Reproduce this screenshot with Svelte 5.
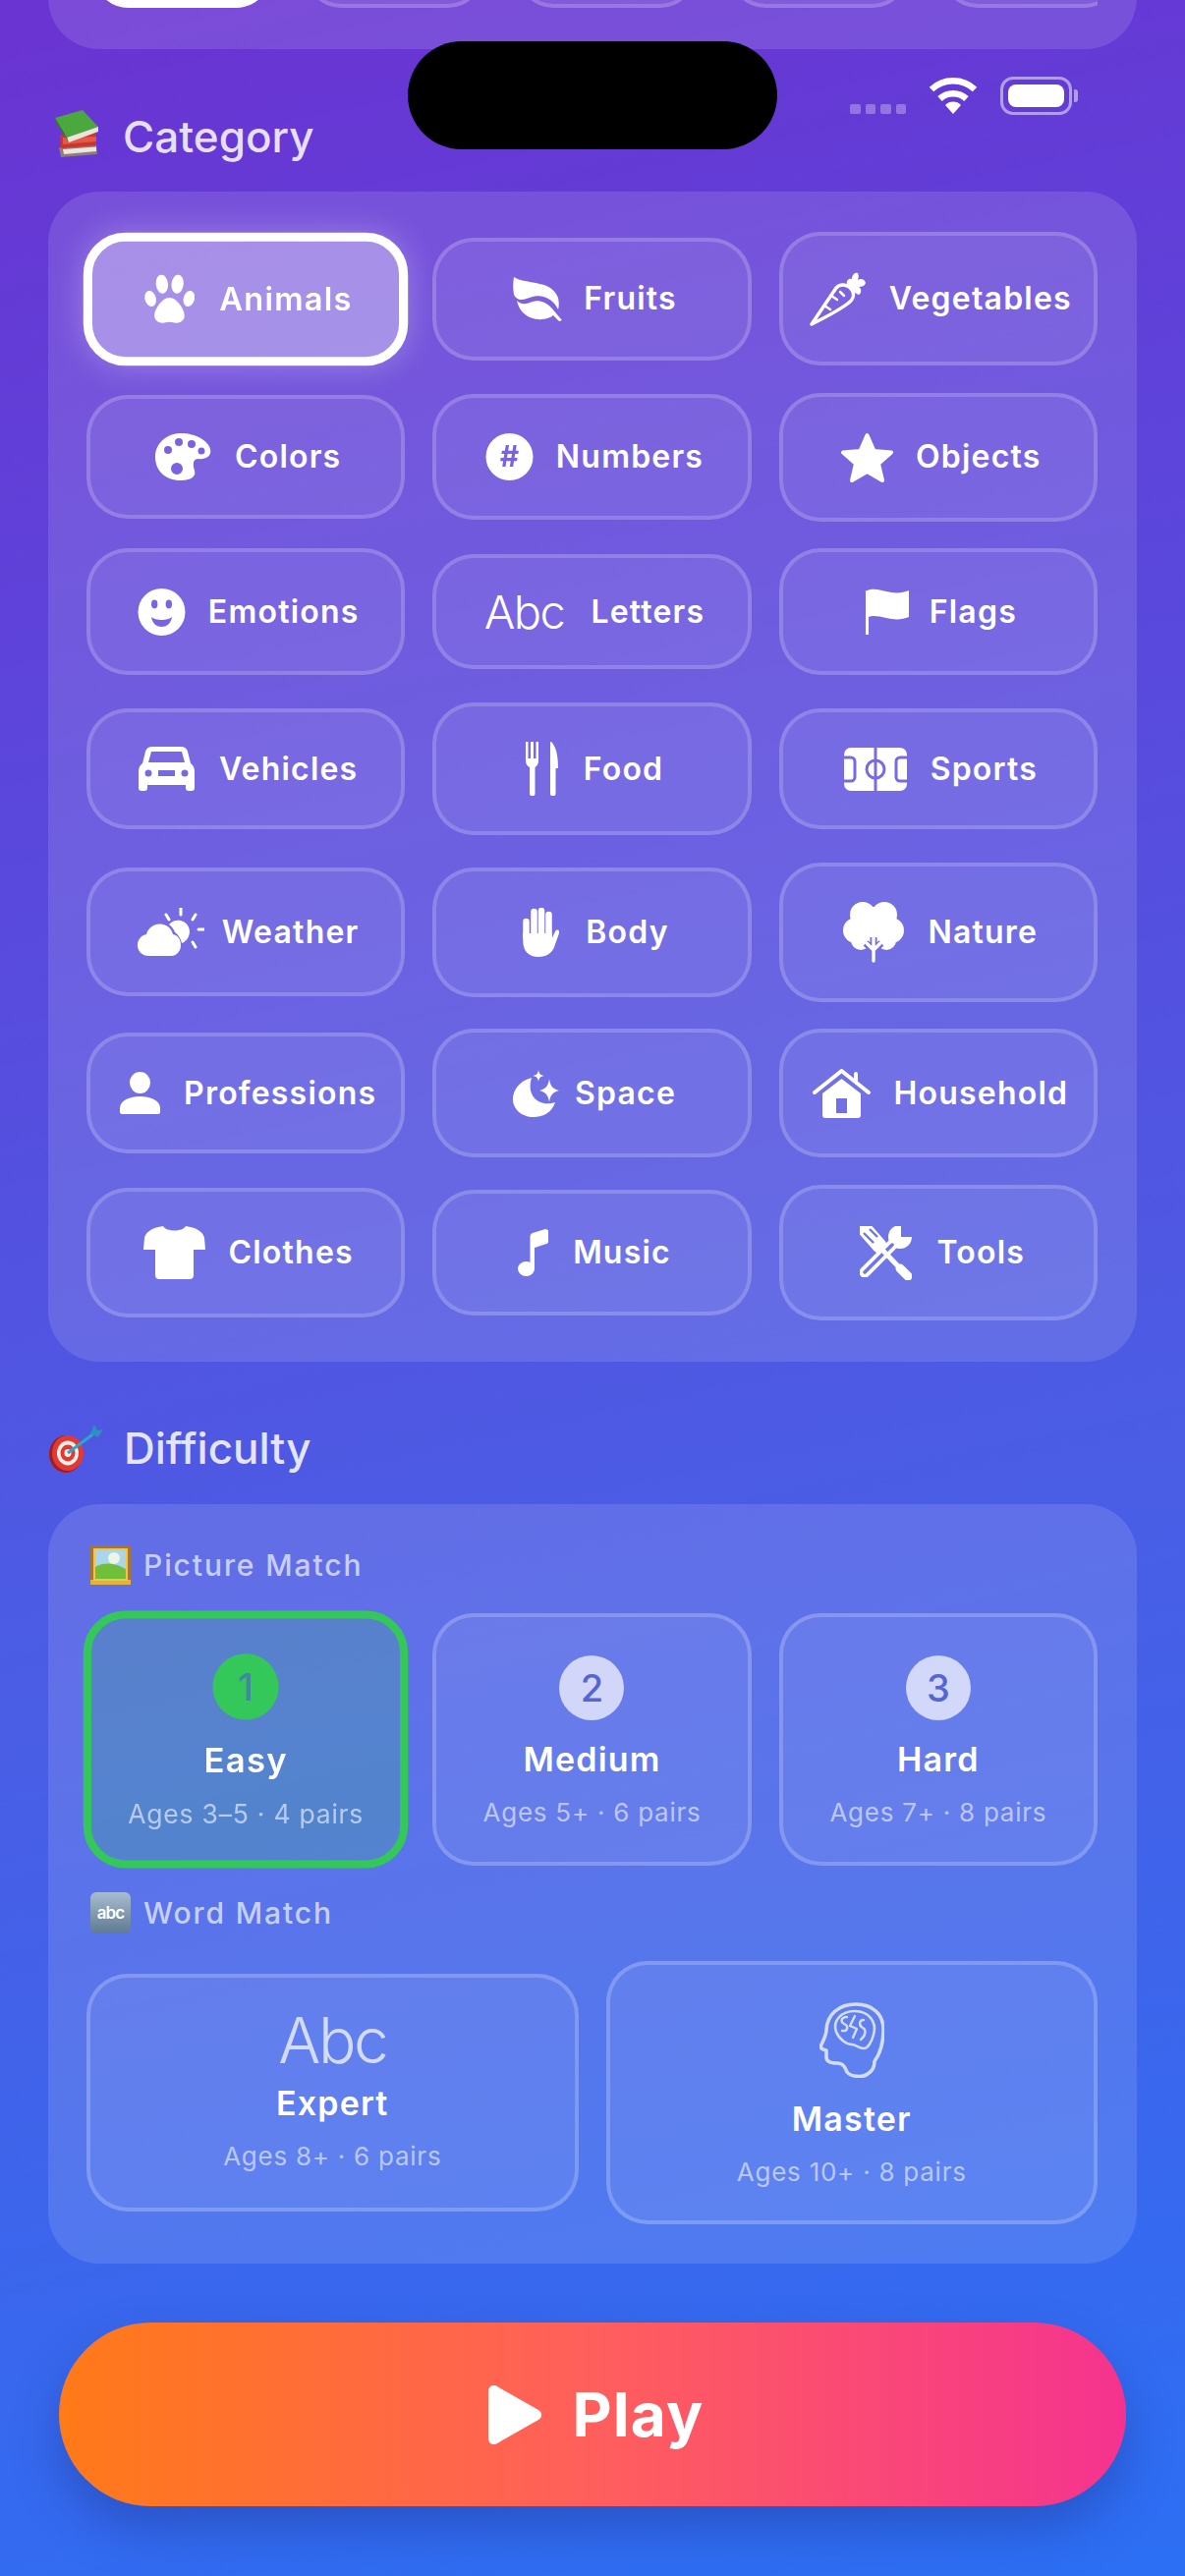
<script>
  const hole = (cx, cy, r) => `M${cx - r} ${cy}a${r} ${r} 0 1 0 ${2 * r} 0a${r} ${r} 0 1 0 ${-2 * r} 0Z`;

  // w/h are the drawn icon, box is the height of the button around it, gap the space before its label
  const categories = [
    { label: 'Animals', box: 133, gap: 25, selected: true, w: 50, h: 49, art: `
      <ellipse cx="6" cy="24" rx="5.5" ry="8" transform="rotate(-14 6 24)"/><ellipse cx="17.5" cy="9.5" rx="6" ry="9.5" transform="rotate(-6 17.5 9.5)"/>
      <ellipse cx="33" cy="9.5" rx="6" ry="9.5" transform="rotate(6 33 9.5)"/><ellipse cx="44.5" cy="24" rx="5.5" ry="8" transform="rotate(14 44.5 24)"/>
      <path d="M25 23C18 23 10 34 10 41C10 47 16 49 20 48C23 47 27 47 30 48C34 49 40 47 40 41C40 34 32 23 25 23Z"/>` },
    { label: 'Fruits', box: 125, gap: 21, w: 52, h: 45, art: `
      <path d="M2 0C14 8 40 2 47 21C48 26 48 30 47 33C42 22 30 16 18 21C10 24 5 24 2 18C1 12 1 6 2 0Z"/>
      <path d="M5 24C10 29 16 27 21 25C30 22 38 27 45 37L51 44L48 45L42 39C34 46 10 46 5 24Z"/>` },
    { label: 'Vegetables', box: 136, gap: 23, w: 58, h: 55, art: `
      <path d="M2 53L27 16C32 11 40 13 43 18C46 23 44 28 40 31C30 39 14 47 2 53Z" fill="none" stroke="#fff" stroke-width="3.5" stroke-linejoin="round"/>
      <path d="M22 24L28 28M15 34L21 38M31 20L35 24" stroke="#fff" stroke-width="2.5" stroke-linecap="round"/>
      <path d="M38 13C37 8 40 6 43 7C43 3 46 0 49 1C50 3 50 5 49 8C52 6 56 7 57 11C56 14 53 15 50 15C53 17 53 21 50 23C47 22 44 20 43 17Z"/>` },
    { label: 'Colors', box: 126, gap: 23, w: 58, h: 48, art: `
      <path fill-rule="evenodd" d="M26 0C42 0 54 8 56 16C58 24 50 27 44 26C38 26 38 32 40 38C42 44 36 48 26 48C10 48 0 38 0 24C0 10 12 0 26 0Z${hole(13, 17, 4)}${hole(24, 9, 4)}${hole(37, 11, 4)}${hole(47, 18, 3.5)}${hole(22, 36, 6)}"/>` },
    { label: 'Numbers', box: 128, gap: 23, w: 49, h: 48, art: `
      <mask id="numMask"><rect width="49" height="48" fill="#fff"/><text x="24.5" y="34" text-anchor="middle" font-size="30" font-weight="700" font-family="Inter" fill="#000">#</text></mask>
      <circle cx="24.5" cy="24" r="24" mask="url(#numMask)"/>` },
    { label: 'Objects', box: 131, gap: 22, w: 55, h: 51, art: `
      <path d="M27.5 3L34.5 19L52 20.5L39 32L43 49L27.5 40L12 49L16 32L3 20.5L20.5 19Z" stroke="#fff" stroke-width="4" stroke-linejoin="round"/>` },
    { label: 'Emotions', box: 129, gap: 23, w: 49, h: 48, art: `
      <path fill-rule="evenodd" d="${hole(24.5, 24, 24)}M14 16a3.2 4.4 0 1 0 6.4 0a3.2 4.4 0 1 0 -6.4 0ZM28.6 16a3.2 4.4 0 1 0 6.4 0a3.2 4.4 0 1 0 -6.4 0ZM14 29C18 33 31 33 35 29C34 36 29 39 24.5 39C20 39 15 36 14 29Z"/>` },
    { label: 'Letters', box: 117, gap: 27, w: 79, h: 34, text: 'Abc' },
    { label: 'Flags', box: 129, gap: 21, w: 45, h: 47, art: `
      <path d="M0 3C8 -1 14 1 22 3C30 5 38 5 45 2V29C38 32 30 32 22 30C14 28 8 27 4 29V47H1V3Z"/>` },
    { label: 'Vehicles', box: 123, gap: 25, w: 57, h: 45, art: `
      <path fill-rule="evenodd" d="M14 0H43C47 0 49 2 50 5L53 17C56 19 57 22 57 26V42C57 44 56 45 54 45H51C49 45 48 44 48 42V39H9V42C9 44 8 45 6 45H3C1 45 0 44 0 42V26C0 22 1 19 4 17L7 5C8 2 10 0 14 0ZM13 5L10 16H47L44 5Z${hole(10, 27, 3.5)}${hole(47, 27, 3.5)}M20 24H37V30H20Z"/>` },
    { label: 'Food', box: 135, gap: 26, w: 33, h: 55, art: `
      <path d="M0 0H2.5V17H5V0H8V17H10.5V0H13V19C13 23 11 25 9.5 26V53C9.5 56 4 56 4 53V26C2 25 0 23 0 19Z"/>
      <path d="M26 0C31 5 33 14 33 27H30.5V53C30.5 56 25 56 25 53V2C25 0 25 0 26 0Z"/>` },
    { label: 'Sports', box: 123, gap: 24, w: 64, h: 44, art: `
      <mask id="courtMask"><rect width="64" height="44" fill="#fff"/>
        <g fill="none" stroke="#000" stroke-width="3"><path d="M32 0V44"/><circle cx="32" cy="22" r="9"/><rect x="-4" y="10" width="15" height="24" rx="4"/><rect x="53" y="10" width="15" height="24" rx="4"/></g></mask>
      <rect width="64" height="44" rx="7" mask="url(#courtMask)"/>` },
    { label: 'Weather', box: 131, gap: 18, w: 68, h: 49, art: `
      <path d="M12 49C4 49 0 44 0 38C0 32 4 28 9 27C11 20 18 15 26 17C31 18 35 22 36 27C41 28 44 32 44 38C44 44 40 49 34 49Z"/>
      <path d="M32 17C35 13 40 12 44 13C51 15 55 22 52 29C51 32 48 35 45 36C44 31 41 27 38 25C37 22 35 19 32 17Z"/>
      <path d="M44 0V7M29 7L32 12M59 7L56 12M62 22H68M56 35L59 40" stroke="#fff" stroke-width="3" stroke-linecap="round"/>` },
    { label: 'Body', box: 132, gap: 27, w: 40, h: 50, art: `
      <path d="M6.5 14V30M14.5 4V28M22 3V28M29.5 7V30" stroke="#fff" stroke-width="6.5" stroke-linecap="round"/>
      <path d="M3.3 26H32.8V31L36 24C38 21 41 23 40 26L35 40C33 46 27 50 19 50C9 50 3.3 44 3.3 34Z"/>` },
    { label: 'Nature', box: 142, gap: 24, w: 62, h: 62, art: `
      <mask id="treeMask"><rect width="62" height="62" fill="#fff"/><path d="M31 36V62M31 49L23 42M31 49L39 42" fill="none" stroke="#000" stroke-width="7"/></mask>
      <g mask="url(#treeMask)"><circle cx="20" cy="13" r="13"/><circle cx="42" cy="13" r="13"/><circle cx="13" cy="29" r="13"/><circle cx="49" cy="29" r="13"/><circle cx="31" cy="24" r="19"/><circle cx="18" cy="39" r="10"/><circle cx="44" cy="39" r="10"/></g>
      <path d="M31 36V60M31 49L24 42M31 49L38 42" fill="none" stroke="#fff" stroke-width="3.4" stroke-linecap="round"/>` },
    { label: 'Professions', box: 123, gap: 24, w: 41, h: 43, art: `
      <ellipse cx="20.5" cy="11" rx="10.5" ry="11"/><path d="M0 41V37C0 29 10 25 20.5 25C31 25 41 29 41 37V41C41 42 40 43 39 43H2C1 43 0 42 0 41Z"/>` },
    { label: 'Space', box: 131, gap: 15, w: 48, h: 48, art: `
      <path d="M19 8C7 11 0 20 0 30C0 40 9 48 21 48C31 48 40 43 43 33C28 38 13 28 19 8Z"/>
      <path d="M37 9C38 16 40 19 47 21C40 23 38 26 37 33C36 26 34 23 27 21C34 19 36 16 37 9Z"/><path d="M26 0C26.6 4 28 5.4 32 6C28 6.6 26.6 8 26 12C25.4 8 24 6.6 20 6C24 5.4 25.4 4 26 0Z"/>` },
    { label: 'Household', box: 131, gap: 23, w: 59, h: 50, art: `
      <path d="M2 24L29.5 2L57 24M44 12V5" fill="none" stroke="#fff" stroke-width="4" stroke-linecap="round" stroke-linejoin="round"/>
      <path fill-rule="evenodd" d="M10 25L29.5 10L49 25V47C49 49 48 50 46 50H13C11 50 10 49 10 47ZM24 30V45H35V30Z"/>` },
    { label: 'Clothes', box: 132, gap: 24, w: 63, h: 54, art: `
      <path d="M20 0C23 6 40 6 43 0L48 1C56 3 61 7 62 12L63 24H51V50C51 53 49 54 47 54H16C14 54 12 53 12 50V24H0L1 12C2 7 7 3 15 1Z"/>` },
    { label: 'Music', box: 128, gap: 25, w: 31, h: 48, art: `
      <ellipse cx="8.5" cy="40.5" rx="8.5" ry="7.5"/><path d="M12.5 40V8C12.5 6 13 5 15 4L28 0C30 0 31 1 31 2V13C31 14 30 15 29 15L17 19V40Z"/>` },
    { label: 'Tools', box: 138, gap: 26, w: 56, h: 55, art: `
      <mask id="toolMask"><rect x="-4" y="-4" width="64" height="64" fill="#fff"/>
        <path d="M36 19L8 47" stroke="#000" stroke-width="3.5" stroke-linecap="round"/><path d="M45 -2L45 11L56 11L58 -2Z" fill="#000"/><path d="M7 7L17 17M13 3L21 11" stroke="#000" stroke-width="2.4"/></mask>
      <g mask="url(#toolMask)"><path d="M38 17L8 47" stroke="#fff" stroke-width="11" stroke-linecap="round"/><circle cx="44" cy="11" r="12"/><path d="M9 4L23 20" stroke="#fff" stroke-width="15" stroke-linecap="round"/></g>
      <path d="M23 21L45 44" stroke="#fff" stroke-width="5"/><path d="M44 43L52 51" stroke="#fff" stroke-width="9" stroke-linecap="round"/>` }
  ];

  const picture = [
    { num: 1, name: 'Easy', info: 'Ages 3–5 · 4 pairs', selected: true },
    { num: 2, name: 'Medium', info: 'Ages 5+ · 6 pairs' },
    { num: 3, name: 'Hard', info: 'Ages 7+ · 8 pairs' }
  ];
</script>

<div class="screen">
  <div class="content">
    <div class="panel topPanel">
      <div class="chips">
        <div class="chip on"></div>
        <div class="chip"></div>
        <div class="chip"></div>
        <div class="chip"></div>
        <div class="chip last"></div>
      </div>
    </div>

    <div class="title">
      <svg width="50" height="48" viewBox="0 0 50 48">
        <path d="M6 38L44 35L45 45L8 48Z" fill="#8b7f78"/><path d="M10 40L44 37.5V42L11 45Z" fill="#ece6df"/>
        <path d="M7 25L44 24V36L8 39Z" fill="#c9362b"/><path d="M10 28L44 27V32L10 35Z" fill="#e8554a"/>
        <path d="M2 8L30 0L46 17L14 28Z" fill="#4aa83e"/><path d="M14 28L46 17L46 22L16 33Z" fill="#e9e6d8"/><path d="M2 8L14 28L16 33L3 13Z" fill="#2f7d2a"/>
      </svg>
      <span>Category</span>
    </div>

    <div class="panel catPanel">
      {#each categories as cat}
        <div class="cat" class:on={cat.selected} style="height:{cat.box}px;gap:{cat.gap}px">
          {#if cat.text}
            <span class="abc">{cat.text}</span>
          {:else}
            <svg width={cat.w} height={cat.h} viewBox="0 0 {cat.w} {cat.h}" fill="#fff">{@html cat.art}</svg>
          {/if}
          <span class="catLabel">{cat.label}</span>
        </div>
      {/each}
    </div>

    <div class="title second">
      <svg width="56" height="50" viewBox="0 0 56 50">
        <ellipse cx="17" cy="31" rx="17" ry="19" fill="#a51c1c"/><ellipse cx="19" cy="30" rx="16" ry="18" fill="#e23a32"/>
        <ellipse cx="19" cy="30" rx="11" ry="12.5" fill="#f5efe9"/><ellipse cx="19" cy="30" rx="7.5" ry="8.5" fill="#e23a32"/><ellipse cx="19" cy="30" rx="3.5" ry="4" fill="#f5efe9"/>
        <path d="M19 30L47 9" stroke="#2fa6c9" stroke-width="3"/><path d="M42 10L46 1L49 7L55 6L50 14Z" fill="#2f8fc0"/>
      </svg>
      <span>Difficulty</span>
    </div>

    <div class="panel diffPanel">
      <div class="sub">
        <svg width="41" height="40" viewBox="0 0 41 40">
          <rect width="41" height="40" fill="#a9742b"/><rect y="35" width="41" height="5" fill="#e2b33c"/><rect x="3" y="3" width="35" height="33" fill="#f1c64a"/>
          <rect x="5" y="5" width="31" height="29" fill="#a9d6ea"/><path d="M5 22C14 16 26 18 36 24V34H5Z" fill="#6fbf3b"/><circle cx="24" cy="13" r="6" fill="#eef4e6"/>
        </svg>
        <span>Picture Match</span>
      </div>
      <div class="levels">
        {#each picture as level}
          <div class="level" class:on={level.selected}>
            <div class="num">{level.num}</div>
            <div class="name">{level.name}</div>
            <div class="info">{level.info}</div>
          </div>
        {/each}
      </div>

      <div class="sub">
        <svg width="41" height="42" viewBox="0 0 41 42">
          <defs><linearGradient id="abcFill" x1="0" y1="0" x2="0" y2="1"><stop offset="0" stop-color="#a8bcd0"/><stop offset="1" stop-color="#5f7a92"/></linearGradient></defs>
          <rect width="41" height="42" rx="6" fill="url(#abcFill)"/>
          <text x="20.5" y="27" text-anchor="middle" font-size="17" font-weight="600" font-family="Inter" letter-spacing="-1" fill="#fff">abc</text>
        </svg>
        <span>Word Match</span>
      </div>
      <div class="words">
        <div class="level expert">
          <div class="bigAbc">Abc</div>
          <div class="name">Expert</div>
          <div class="info">Ages 8+ · 6 pairs</div>
        </div>
        <div class="level master">
          <svg width="66" height="77" viewBox="0 0 66 77" fill="none" stroke="#fff" stroke-opacity=".72" stroke-width="3.6" stroke-linejoin="round" stroke-linecap="round">
            <path d="M56 60C62 52 65 40 65 28C65 12 54 2 37 2C20 2 8 12 7 28C7 33 5 37 2 43C0 47 3 48 7 49V56C7 60 11 62 18 62C24 62 26 66 28 71C32 76 44 77 49 73C54 70 56 66 56 60Z"/>
            <path d="M17 30C13 19 22 9 36 9C50 9 59 20 55 33C53 41 49 47 45 47C40 47 37 43 33 43C28 43 20 38 17 30Z" stroke-width="2.6"/>
            <path d="M28 15C22 15 21 20 25 22C30 24 29 30 23 29M36 14L31 24L38 27L34 36M45 18C40 18 40 24 44 26C48 28 47 34 42 38" stroke-width="2.4"/>
          </svg>
          <div class="name">Master</div>
          <div class="info">Ages 10+ · 8 pairs</div>
        </div>
      </div>
    </div>

    <div class="play">
      <svg width="54" height="60" viewBox="0 0 54 60" fill="#fff"><path d="M0 6C0 1 5 -2 9 1L51 25C55 27 55 33 51 35L9 59C5 62 0 59 0 54Z"/></svg>
      <span>Play</span>
    </div>
  </div>

  <div class="island"></div>
  <div class="status">
    <div class="signal"><i></i><i></i><i></i><i></i></div>
    <svg width="50" height="38" viewBox="0 0 50 38" fill="none" stroke="#fff" stroke-width="6.5">
      <path d="M3 13A32 32 0 0 1 47 13"/><path d="M11.5 22.5A20 20 0 0 1 38.5 22.5"/><path d="M17 29A11 11 0 0 1 33 29L25 38Z" fill="#fff" stroke="none"/>
    </svg>
    <div class="battery"><div class="charge"></div></div>
  </div>
</div>

<style>
  :global(body) {
    margin: 0;
  }

  .screen {
    position: relative;
    width: 1206px;
    height: 2622px;
    overflow: hidden;
    background: linear-gradient(168deg, #6a33d2 0%, #5a48dc 30%, #4c5ce4 58%, #2c6ff4 100%);
    font-family: Inter, "Noto Sans", sans-serif;
    color: #fff;
  }

  .content {
    margin-top: -110px;
    display: flex;
    flex-direction: column;
  }

  .panel {
    margin: 0 49px;
    border-radius: 52px;
    background: rgba(255, 255, 255, 0.12);
  }

  .topPanel {
    height: 160px;
    box-sizing: border-box;
    padding: 0 40px 42px 39px;
    display: flex;
    align-items: flex-end;
    overflow: hidden;
  }

  .chips {
    display: flex;
    gap: 35px;
    padding-left: 7px;
    width: 100%;
    overflow: hidden;
    height: 110px;
    box-sizing: border-box;
    align-items: flex-end;
  }

  .chip {
    flex: 0 0 181px;
    height: 102px;
    border: 4px solid rgba(255, 255, 255, 0.18);
    border-radius: 36px;
    box-sizing: border-box;
    background: rgba(255, 255, 255, 0.07);
  }

  .chip.on {
    border: 9px solid #fff;
    background: rgba(255, 255, 255, 0.35);
  }

  .title {
    display: flex;
    align-items: center;
    gap: 21px;
    height: 48px;
    margin: 62px 54px 35px;
    font-size: 44px;
    font-weight: 500;
    line-height: 48px;
    color: rgba(255, 255, 255, 0.85);
  }

  .title span {
    padding-top: 6px;
  }

  .title.second {
    margin: 64px 50px 33px;
    gap: 20px;
  }

  .title.second span {
    padding-top: 0;
  }

  .catPanel {
    padding: 41px 40px 42px 39px;
    display: grid;
    grid-template-columns: repeat(3, 1fr);
    column-gap: 28px;
    row-gap: 27.7px;
    align-items: center;
  }

  .cat {
    display: flex;
    align-items: center;
    justify-content: center;
    box-sizing: border-box;
    padding-left: 5px;
    border: 4px solid rgba(255, 255, 255, 0.18);
    border-radius: 42px;
    background: rgba(255, 255, 255, 0.07);
  }

  .cat.on {
    border: 9px solid #fff;
    background: rgba(255, 255, 255, 0.36);
    box-shadow: 0 0 32px rgba(255, 255, 255, 0.28);
    transform: scale(1.02);
  }

  .catLabel {
    font-size: 32px;
    font-weight: 600;
    line-height: 38px;
    letter-spacing: 1.2px;
    white-space: nowrap;
  }

  .abc {
    font-size: 47px;
    font-weight: 300;
    line-height: 34px;
    letter-spacing: -1.5px;
  }

  .diffPanel {
    padding: 42px 40px 40px 39px;
    display: flex;
    flex-direction: column;
  }

  .sub {
    display: flex;
    align-items: center;
    gap: 13px;
    margin-left: 4px;
    font-size: 30px;
    font-weight: 500;
    letter-spacing: 1.9px;
    color: rgba(255, 255, 255, 0.68);
  }

  .levels {
    display: grid;
    grid-template-columns: repeat(3, 1fr);
    column-gap: 28px;
    margin: 29px 0 27px;
  }

  .words {
    display: grid;
    grid-template-columns: repeat(2, 1fr);
    column-gap: 28px;
    align-items: center;
    margin-top: 28px;
  }

  .level {
    display: flex;
    flex-direction: column;
    align-items: center;
    box-sizing: border-box;
    height: 257px;
    padding-top: 39px;
    border: 4px solid rgba(255, 255, 255, 0.2);
    border-radius: 42px;
    background: rgba(255, 255, 255, 0.07);
  }

  .level.on {
    border: 8.5px solid #34c759;
    background: rgba(60, 190, 110, 0.22);
    padding-top: 34.5px;
    transform: scale(1.02);
  }

  .expert {
    height: 242px;
    padding-top: 32px;
  }

  .master {
    height: 268px;
    padding-top: 38px;
  }

  .num {
    width: 66px;
    height: 66px;
    border-radius: 50%;
    display: flex;
    align-items: center;
    justify-content: center;
    background: rgba(255, 255, 255, 0.7);
    color: #5566d2;
    font-size: 38px;
    font-weight: 500;
    margin-bottom: 20px;
  }

  .level.on .num {
    background: #34c759;
    color: rgba(70, 110, 190, 0.7);
  }

  .name {
    font-size: 34px;
    font-weight: 600;
    line-height: 40px;
    letter-spacing: 1.2px;
    margin-bottom: 18px;
  }

  .info {
    font-size: 26px;
    line-height: 32px;
    letter-spacing: 0.75px;
    color: rgba(255, 255, 255, 0.58);
  }

  .bigAbc {
    font-size: 64px;
    font-weight: 300;
    line-height: 64px;
    letter-spacing: -2.5px;
    margin-bottom: 12px;
    color: rgba(255, 255, 255, 0.72);
  }

  .master svg {
    margin-bottom: 22px;
  }

  .play {
    margin: 60px 60px 0;
    height: 187px;
    padding-left: 8px;
    border-radius: 94px;
    display: flex;
    align-items: center;
    justify-content: center;
    gap: 31px;
    background: linear-gradient(90deg, #ff7a18 0%, #ff5f5c 50%, #f5338f 100%);
    box-shadow: 0 24px 48px rgba(30, 50, 140, 0.4);
    font-size: 62px;
    font-weight: 700;
    letter-spacing: 1.2px;
  }

  .island {
    position: absolute;
    left: 415px;
    top: 42px;
    width: 376px;
    height: 110px;
    border-radius: 55px;
    background: #000;
  }

  .status {
    position: absolute;
    left: 865px;
    top: 78px;
    display: flex;
    align-items: flex-start;
    gap: 23px;
  }

  .signal {
    display: flex;
    gap: 5px;
    margin-top: 28px;
  }

  .signal i {
    width: 10.5px;
    height: 10px;
    border-radius: 2px;
    background: rgba(255, 255, 255, 0.3);
  }

  .battery {
    position: relative;
    box-sizing: border-box;
    width: 73px;
    height: 39px;
    padding: 5px;
    border: 3px solid rgba(255, 255, 255, 0.5);
    border-radius: 13px;
  }

  .battery::after {
    content: "";
    position: absolute;
    right: -9px;
    top: 10px;
    width: 4px;
    height: 13px;
    border-radius: 0 3px 3px 0;
    background: rgba(255, 255, 255, 0.5);
  }

  .charge {
    height: 100%;
    border-radius: 8px;
    background: #fff;
  }
</style>
